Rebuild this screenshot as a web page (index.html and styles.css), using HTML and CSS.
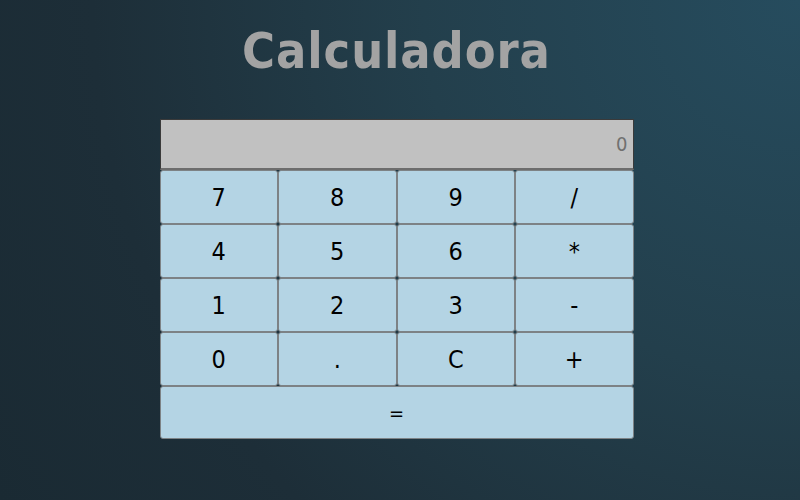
FILE: index.html
```html
<!DOCTYPE html>
<html lang="es">
<head>
<meta charset="utf-8">
<title>Calculadora</title>
<link rel="stylesheet" href="styles.css">
</head>
<body>
<main class="page">
  <h1 class="title">Calculadora</h1>
  <div class="calc">
    <input class="display" type="text" value="0" readonly>
    <div class="keys">
      <button class="key">7</button>
      <button class="key">8</button>
      <button class="key">9</button>
      <button class="key">/</button>
      <button class="key">4</button>
      <button class="key">5</button>
      <button class="key">6</button>
      <button class="key">*</button>
      <button class="key">1</button>
      <button class="key">2</button>
      <button class="key">3</button>
      <button class="key">-</button>
      <button class="key">0</button>
      <button class="key">.</button>
      <button class="key">C</button>
      <button class="key">+</button>
      <button class="key key-wide">=</button>
    </div>
  </div>
</main>
</body>
</html>
```

FILE: styles.css
```css
* { box-sizing: border-box; }
html, body { margin: 0; height: 100%; }
body {
  background: radial-gradient(circle at 100% 0%, #264c5e 0%, #233f4c 40%, #1d2e38 75%, #1a2a33 100%);
  font-family: "DejaVu Sans Condensed", "DejaVu Sans", sans-serif;
}
.page {
  height: 500px;
  display: flex;
  flex-direction: column;
  align-items: center;
  padding-top: 23px;
  padding-right: 7px;
}
.title {
  margin: 0;
  color: #a3a3a3;
  font-size: 50px;
  font-weight: bold;
  line-height: 56px;
  letter-spacing: 0.9px;
}
.calc {
  margin-top: 40px;
  width: 474px;
  display: flex;
  flex-direction: column;
}
.display {
  width: 100%;
  height: 51px;
  margin: 0;
  background: #c1c1c1;
  border: 1px solid #3a3a3a;
  border-bottom: 2px solid #6d6d6d;
  text-align: right;
  padding: 0 5px 0 0;
  font-family: inherit;
  font-size: 20px;
  color: #707070;
  outline: none;
}
.keys {
  display: grid;
  grid-template-columns: repeat(4, 1fr);
  grid-auto-rows: 54px;
}
.key {
  margin: 0;
  background: #b4d4e4;
  border: 1px solid #7d8285;
  border-radius: 3px;
  font-family: inherit;
  font-size: 25px;
  color: #000;
  padding: 0;
}
.key-wide {
  grid-column: span 4;
  font-size: 20px;
  height: 53px;
}
```
